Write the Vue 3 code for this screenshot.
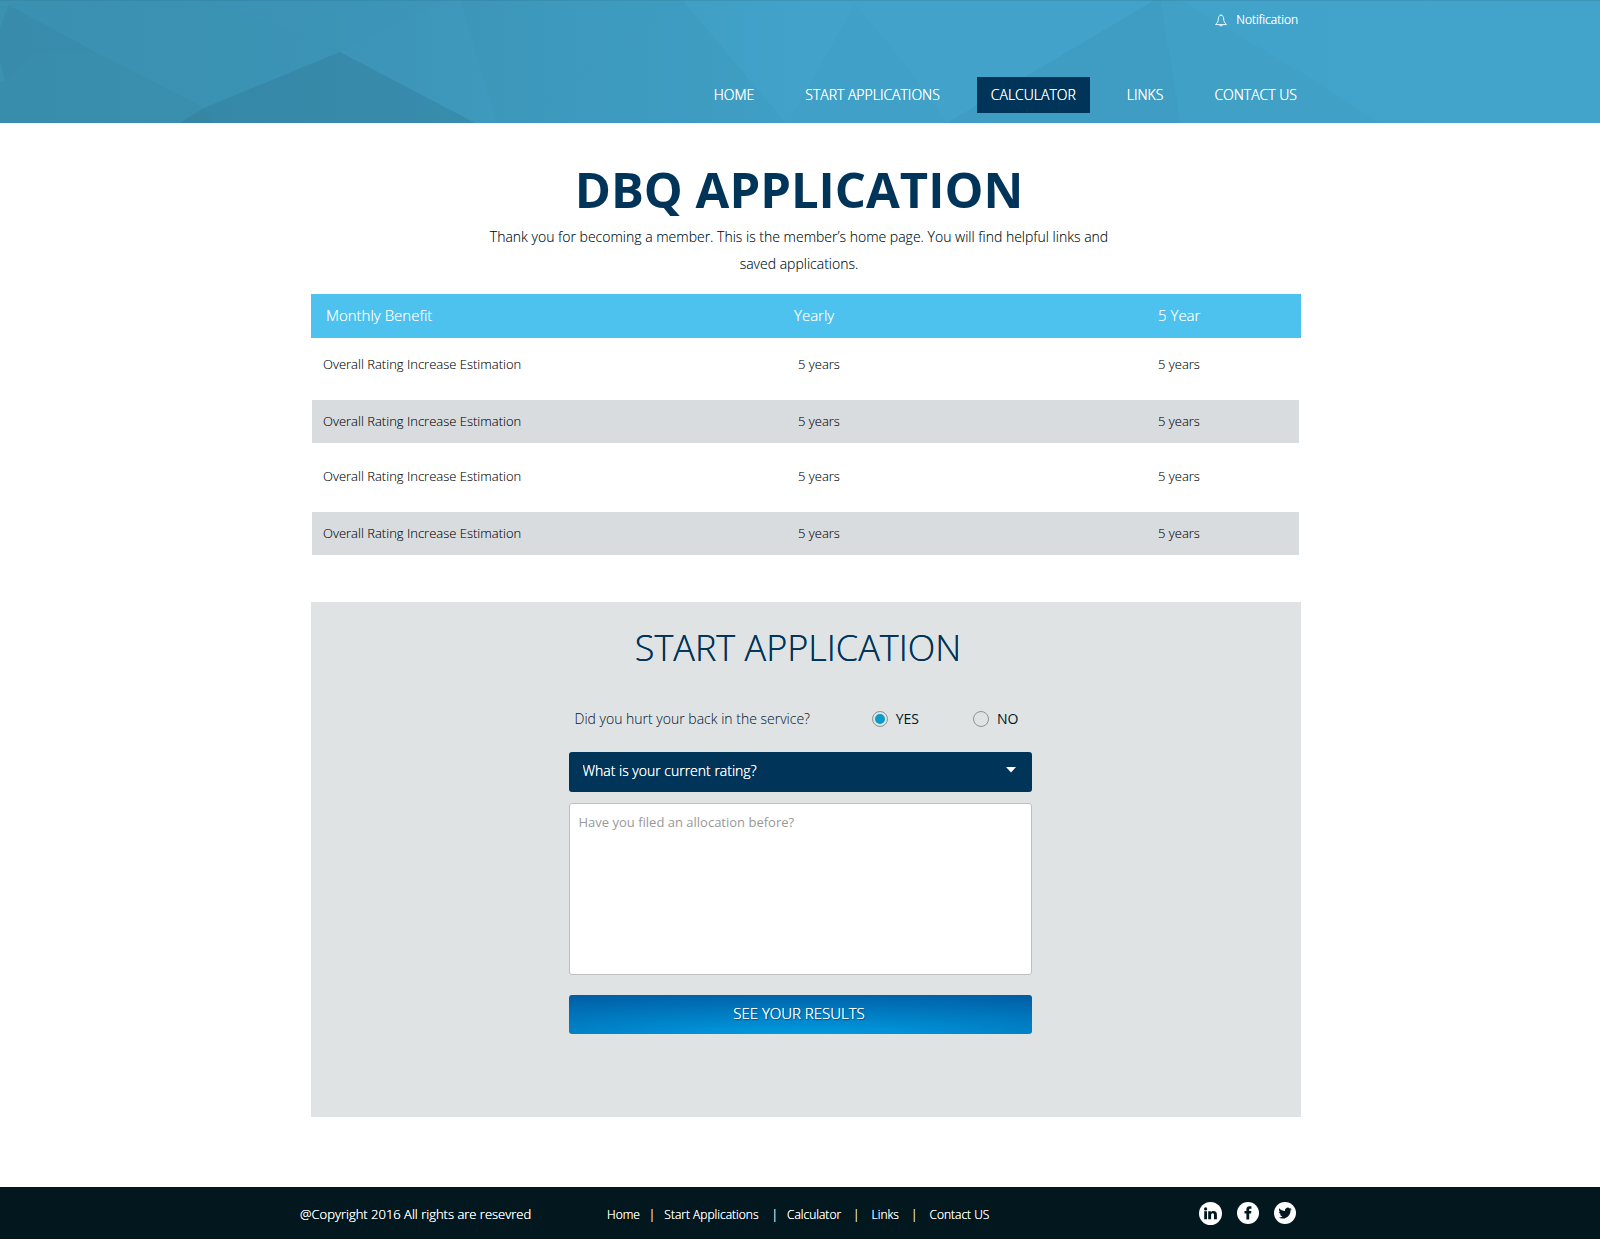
<script setup>
import { ref } from 'vue'

const nav = [
  { label: 'HOME' },
  { label: 'START APPLICATIONS' },
  { label: 'CALCULATOR', active: true },
  { label: 'LINKS' },
  { label: 'CONTACT US' },
]

const rows = Array.from({ length: 4 }, () => ['Overall Rating Increase Estimation', '5 years', '5 years'])

const footerLinks = ['Home', 'Start Applications', 'Calculator', 'Links', 'Contact US']

const hurt = ref('yes')
const rating = ref('')
const filed = ref('')
</script>

<template>
  <div class="page">
    <header class="header">
      <svg class="facets" viewBox="0 0 1600 123" preserveAspectRatio="none" aria-hidden="true">
        <defs>
          <linearGradient id="sky" x1="0" x2="1" y1="0" y2="0">
            <stop offset="0" stop-color="#3b91b1" />
            <stop offset="0.2" stop-color="#3c94b7" />
            <stop offset="0.5" stop-color="#42a2c9" />
            <stop offset="1" stop-color="#42a4cb" />
          </linearGradient>
        </defs>
        <rect width="1600" height="123" fill="url(#sky)" />
        <g fill="#2f7690">
          <path d="M8 5L95 52H37L5 82L0 60V30Z" opacity="0.18" />
          <path d="M95 52L204 108L212 123H0V82H5L37 52Z" opacity="0.14" />
          <path d="M340 52L475 123H180L204 108Z" opacity="0.35" />
          <path d="M205 0L340 52L204 108L95 52L8 5L80 0Z" opacity="0.04" />
          <path d="M205 0H445L340 52Z" opacity="0.03" />
          <path d="M460 0H675L520 123H497Z" opacity="0.05" />
          <path d="M675 0H682L786 123H520Z" opacity="0.05" />
          <path d="M855 3L910 70L947 123H788Z" opacity="0.03" />
          <path d="M1155 0H1160L1180 123H947Z" opacity="0.13" />
          <path d="M1160 0H1180L1300 72L1380 123H1180Z" opacity="0.06" />
          <rect width="1600" height="1" opacity="0.3" />
        </g>
      </svg>
      <div class="header-inner">
        <a class="notification" href="#">
          <svg width="12" height="13" viewBox="0 0 12 13" fill="none" stroke="#fff" aria-hidden="true">
            <path d="M6 1.3C4 1.3 3.3 3 3.3 5C3.3 7.6 2.4 8.6 .6 10.6H11.4C9.6 8.6 8.7 7.6 8.7 5C8.7 3 8 1.3 6 1.3Z" stroke-width="0.9" />
            <path d="M4.4 10.8C4.6 12.3 7.4 12.3 7.6 10.8M6 .2V1.3" stroke-width="0.9" />
          </svg>
          <span>Notification</span>
        </a>
        <nav class="nav">
          <a v-for="item in nav" :key="item.label" href="#" :class="{ active: item.active }">{{ item.label }}</a>
        </nav>
      </div>
    </header>

    <main class="main">
      <div class="intro">
        <h1>DBQ APPLICATION</h1>
        <p>Thank you for becoming a member. This is the member’s home page. You will find helpful links and saved applications.</p>
      </div>

      <table class="rates">
        <thead>
          <tr>
            <th scope="col">Monthly Benefit</th>
            <th scope="col">Yearly</th>
            <th scope="col">5 Year</th>
          </tr>
        </thead>
        <tbody>
          <tr v-for="(row, i) in rows" :key="i">
            <td v-for="(cell, j) in row" :key="j">{{ cell }}</td>
          </tr>
        </tbody>
      </table>

      <section class="panel">
        <h2>START APPLICATION</h2>
        <form class="form" @submit.prevent>
          <fieldset class="question" aria-labelledby="hurt-question">
            <span id="hurt-question" class="question-text">Did you hurt your back in the service?</span>
            <label class="choice"><input v-model="hurt" type="radio" name="hurt" value="yes" />YES</label>
            <label class="choice"><input v-model="hurt" type="radio" name="hurt" value="no" />NO</label>
          </fieldset>
          <div class="select-wrap">
            <select v-model="rating" aria-label="What is your current rating?">
              <option value="">What is your current rating?</option>
            </select>
            <svg class="caret" width="10" height="6" viewBox="0 0 10 6" aria-hidden="true"><path d="M0 0H10L5 5.5Z" fill="#fff" /></svg>
          </div>
          <textarea v-model="filed" aria-label="Have you filed an allocation before?" placeholder="Have you filed an allocation before?"></textarea>
          <button type="submit">SEE YOUR RESULTS</button>
        </form>
      </section>
    </main>

    <footer class="footer">
      <div class="footer-inner">
        <span class="copyright">@Copyright 2016 All rights are resevred</span>
        <ul class="footer-links">
          <li v-for="link in footerLinks" :key="link"><a href="#">{{ link }}</a></li>
        </ul>
        <div class="social">
          <a href="#" aria-label="LinkedIn">
            <svg width="23" height="23" viewBox="0 0 23 23" aria-hidden="true">
              <circle cx="11.5" cy="11.5" r="11.5" fill="#fff" />
              <g fill="#02171e">
                <circle cx="6.6" cy="6.9" r="1.6" />
                <path d="M5.2 9.3H8V17.2H5.2ZM9.2 9.3H11.9V10.4C12.4 9.6 13.3 9.1 14.4 9.1C16.9 9.1 17.9 10.5 17.9 12.7V17.2H15V13.2C15 12 14.7 11.3 13.7 11.3C12.5 11.3 12.1 12.1 12.1 13.2V17.2H9.2Z" />
              </g>
            </svg>
          </a>
          <a href="#" aria-label="Facebook">
            <svg width="22" height="22" viewBox="0 0 22 22" aria-hidden="true">
              <circle cx="11" cy="11" r="11" fill="#fff" />
              <path d="M9.4 17.6V11.6H7.5V9.1H9.4V7.6C9.4 5.4 10.6 4.3 12.6 4.3H14.4V6.8H13.2C12.5 6.8 12.2 7.1 12.2 7.8V9.1H14.4L14.1 11.6H12.2V17.6Z" fill="#02171e" />
            </svg>
          </a>
          <a href="#" aria-label="Twitter">
            <svg width="22" height="22" viewBox="0 0 22 22" aria-hidden="true">
              <circle cx="11" cy="11" r="11" fill="#fff" />
              <path transform="translate(4.4 4.4) scale(0.56)" fill="#02171e" d="M23.95 4.57a10 10 0 01-2.82.77 4.96 4.96 0 002.16-2.72c-.95.55-2 .95-3.13 1.18a4.92 4.92 0 00-8.38 4.48C7.69 8.09 4.07 6.13 1.64 3.16a4.82 4.82 0 00-.67 2.48c0 1.71.87 3.21 2.19 4.1a4.9 4.9 0 01-2.23-.62v.06a4.92 4.92 0 003.95 4.83 5 5 0 01-2.21.08 4.94 4.94 0 004.6 3.42A9.87 9.87 0 010 19.54a14 14 0 007.55 2.21c9.05 0 14-7.5 14-13.99 0-.21 0-.42-.02-.63a9.94 9.94 0 002.46-2.55z" />
            </svg>
          </a>
        </div>
      </div>
    </footer>
  </div>
</template>

<style>
body {
  margin: 0;
  background: #fff;
}
</style>

<style scoped>
.page {
  display: flex;
  flex-direction: column;
  min-height: 100vh;
  font-family: "Open Sans", "Noto Sans", sans-serif;
  font-weight: 300;
  color: #02171e;
}

a {
  color: inherit;
  text-decoration: none;
}

.header {
  position: relative;
  background: #42a4cb;
  color: #fff;
  text-shadow: 0 0 0 #fff;
}

.facets {
  position: absolute;
  inset: 0;
  width: 100%;
  height: 100%;
}

.header-inner {
  position: relative;
  display: flex;
  flex-direction: column;
  align-items: flex-end;
  justify-content: space-between;
  gap: 47px;
  box-sizing: border-box;
  max-width: 1022px;
  margin: 0 auto;
  padding: 10px 0;
}

.notification {
  display: flex;
  align-items: center;
  gap: 9px;
  padding-right: 13px;
  font-size: 12px;
  line-height: 20px;
}

.nav {
  display: flex;
  gap: 23px;
  font-size: 14px;
  line-height: 36px;
}

.nav a {
  padding: 0 14px;
}

.nav .active {
  background: #013459;
}

.main {
  flex: 1;
  box-sizing: border-box;
  width: 100%;
  max-width: 1002px;
  margin: 0 auto;
  padding: 34px 0 70px 12px;
}

.intro {
  max-width: 640px;
  margin: 0 auto;
  padding-right: 14px;
  text-align: center;
}

h1 {
  margin: 0 0 2px;
  color: #013459;
  font-size: 49px;
  font-weight: 700;
  line-height: 64px;
}

.intro p {
  margin: 0;
  font-size: 14px;
  line-height: 27px;
  text-shadow: 0 0 0 rgba(2, 23, 30, 0.4);
}

.rates {
  width: 100%;
  margin-top: 17px;
  border-spacing: 0;
  table-layout: fixed;
  text-align: left;
}

.rates th {
  box-sizing: border-box;
  height: 44px;
  padding: 0 0 2px;
  background: #4dc2ef;
  color: #fff;
  font-size: 15px;
  font-weight: 300;
  text-shadow: 0 0 0 rgba(255, 255, 255, 0.6);
}

.rates th:nth-child(1) {
  width: 483px;
  padding-left: 15px;
}

.rates th:nth-child(2) {
  width: 364px;
}

.rates td {
  box-sizing: border-box;
  padding: 0 0 2px;
  background-clip: padding-box;
  color: #111;
  font-size: 13px;
  text-shadow: 0 0 0 rgba(17, 17, 17, 0.4);
}

.rates tr:nth-child(odd) td {
  height: 69px;
  padding-bottom: 4px;
}

.rates tr:first-child td {
  height: 62px;
  padding-bottom: 10px;
}

.rates tr:nth-child(even) td {
  height: 43px;
  background-color: #d8dcdf;
}

.rates td:first-child {
  padding-left: 11px;
  border-left: 1px solid transparent;
}

.rates td:nth-child(2) {
  padding-left: 4px;
}

.rates td:last-child {
  border-right: 2px solid transparent;
}

.panel {
  margin-top: 47px;
  padding: 19px 12px 83px 0;
  background: #dfe3e4;
}

h2 {
  margin: 0;
  padding-right: 4px;
  color: #013459;
  font-size: 36px;
  font-weight: 300;
  line-height: 54px;
  text-align: center;
  text-shadow: 0 0 0 #013459;
}

.form {
  display: flex;
  flex-direction: column;
  max-width: 463px;
  margin: 0 auto;
}

.question {
  display: flex;
  align-items: center;
  margin: 31px 0 20px;
  padding: 0 13px 0 6px;
  border: 0;
  font-size: 14px;
  line-height: 26px;
}

.question-text {
  flex: 1;
  color: #0f2338;
  text-shadow: 0 0 0 rgba(15, 35, 56, 0.2);
}

.choice {
  display: flex;
  align-items: center;
  gap: 8px;
  font-weight: 400;
}

.choice + .choice {
  margin-left: 54px;
}

.choice input {
  display: grid;
  place-items: center;
  appearance: none;
  box-sizing: border-box;
  width: 16px;
  height: 16px;
  margin: 0;
  border: 1px solid #8d9294;
  border-radius: 50%;
}

.choice input:checked::before {
  content: "";
  width: 10px;
  height: 10px;
  border-radius: 50%;
  background: #0a9bc9;
}

.select-wrap {
  position: relative;
}

select {
  display: block;
  appearance: none;
  box-sizing: border-box;
  width: 100%;
  height: 40px;
  padding: 0 40px 4px 14px;
  border: 0;
  border-radius: 3px;
  background: #013459;
  color: #fff;
  font: 300 14px "Open Sans", "Noto Sans", sans-serif;
  text-shadow: 0 0 0 #fff;
}

.caret {
  position: absolute;
  top: 15px;
  right: 16px;
  pointer-events: none;
}

textarea {
  display: block;
  box-sizing: border-box;
  width: 100%;
  height: 172px;
  margin: 11px 0 20px;
  padding: 8px 9px;
  border: 1px solid #bdbfc0;
  border-radius: 3px;
  background: #fff;
  color: #02171e;
  font: 400 13px/20px "Open Sans", "Noto Sans", sans-serif;
  resize: none;
}

textarea::placeholder {
  color: #999;
}

button {
  height: 39px;
  padding: 0 2px 4px 0;
  border: 0;
  border-radius: 3px;
  background: radial-gradient(ellipse 110% 130% at 50% 115%, #00a2e8, #005ca2);
  color: #fff;
  font: 300 15px "Open Sans", "Noto Sans", sans-serif;
  text-shadow: 0 0 0 #fff, 1px 1px 1px rgba(0, 30, 70, 0.6);
}

.footer {
  background: #02171e;
  color: #fff;
  text-shadow: 0 0 0 #fff;
}

.footer-inner {
  display: flex;
  align-items: center;
  max-width: 1000px;
  min-height: 52px;
  margin: 0 auto;
  font-size: 12px;
}

.copyright {
  flex: 0 0 307px;
  padding-top: 2px;
  font-size: 13px;
}

.footer-links {
  display: flex;
  margin: 0;
  padding: 3px 0 0;
  list-style: none;
}

.footer-links li + li::before {
  content: "|";
  margin: 0 12px;
}

.footer-links li:nth-child(2)::before {
  margin: 0 9px;
}

.footer-links li:nth-child(3)::before {
  margin: 0 9px 0 13px;
}

.social {
  display: flex;
  align-items: center;
  gap: 15px;
  margin-left: auto;
  padding-right: 4px;
}

.social svg {
  display: block;
}
</style>
